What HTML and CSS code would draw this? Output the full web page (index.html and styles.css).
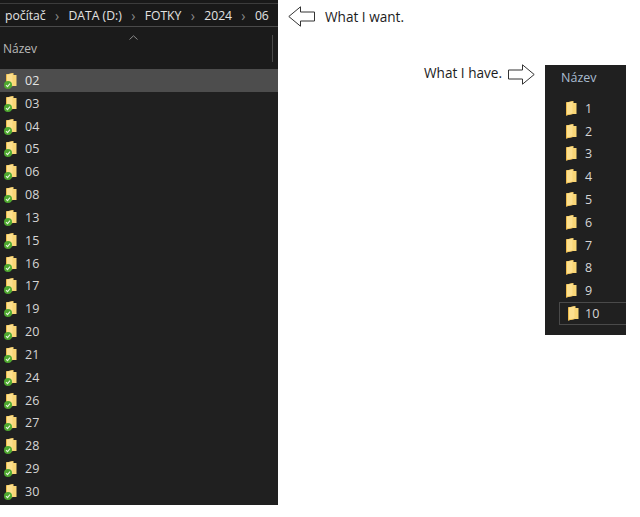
FILE: index.html
```html
<!DOCTYPE html>
<html lang="cs">
<head>
<meta charset="utf-8">
<title>Složky</title>
<link rel="stylesheet" href="styles.css">
</head>
<body>
<svg class="defs" width="0" height="0" aria-hidden="true">
  <defs>
    <symbol id="folder" viewBox="0 0 14 17">
      <path d="M2 2.5 L9.5 1 V3 H12.5 V14 H9 L2 15.5 Z" fill="#f9d676"/>
      <path d="M2 2.5 L8.8 1.2 V14 L2 15.5 Z" fill="#eebb4c"/>
      <path d="M3 2.6 L8.8 1.4 V13.5 L3 14.6 Z" fill="#fde08e"/>
    </symbol>
    <symbol id="badge" viewBox="0 0 8 8">
      <circle cx="4" cy="4" r="4" fill="#4ea82f"/>
      <path d="M2 4.2 L3.5 5.6 L6 2.7" fill="none" stroke="#e9f6df" stroke-width="1.1"/>
    </symbol>
  </defs>
</svg>
<div class="page">
  <section class="explorer">
    <div class="topline"></div>
    <nav class="crumbs">
      <span class="crumb">počítač</span><span class="sep">›</span>
      <span class="crumb">DATA (D:)</span><span class="sep">›</span>
      <span class="crumb">FOTKY</span><span class="sep">›</span>
      <span class="crumb">2024</span><span class="sep">›</span>
      <span class="crumb">06</span>
    </nav>
    <div class="header">
      <svg class="sort" width="9" height="5" viewBox="0 0 9 5"><path d="M0.5 4.5 L4.5 0.8 L8.5 4.5" fill="none" stroke="#8a8a8a"/></svg>
      <span>Název</span>
      <i class="divider"></i>
    </div>
    <ul class="rows">
      <li class="row selected"><span class="ico"><svg class="f"><use href="#folder"/></svg><svg class="b"><use href="#badge"/></svg></span>02</li>
      <li class="row"><span class="ico"><svg class="f"><use href="#folder"/></svg><svg class="b"><use href="#badge"/></svg></span>03</li>
      <li class="row"><span class="ico"><svg class="f"><use href="#folder"/></svg><svg class="b"><use href="#badge"/></svg></span>04</li>
      <li class="row"><span class="ico"><svg class="f"><use href="#folder"/></svg><svg class="b"><use href="#badge"/></svg></span>05</li>
      <li class="row"><span class="ico"><svg class="f"><use href="#folder"/></svg><svg class="b"><use href="#badge"/></svg></span>06</li>
      <li class="row"><span class="ico"><svg class="f"><use href="#folder"/></svg><svg class="b"><use href="#badge"/></svg></span>08</li>
      <li class="row"><span class="ico"><svg class="f"><use href="#folder"/></svg><svg class="b"><use href="#badge"/></svg></span>13</li>
      <li class="row"><span class="ico"><svg class="f"><use href="#folder"/></svg><svg class="b"><use href="#badge"/></svg></span>15</li>
      <li class="row"><span class="ico"><svg class="f"><use href="#folder"/></svg><svg class="b"><use href="#badge"/></svg></span>16</li>
      <li class="row"><span class="ico"><svg class="f"><use href="#folder"/></svg><svg class="b"><use href="#badge"/></svg></span>17</li>
      <li class="row"><span class="ico"><svg class="f"><use href="#folder"/></svg><svg class="b"><use href="#badge"/></svg></span>19</li>
      <li class="row"><span class="ico"><svg class="f"><use href="#folder"/></svg><svg class="b"><use href="#badge"/></svg></span>20</li>
      <li class="row"><span class="ico"><svg class="f"><use href="#folder"/></svg><svg class="b"><use href="#badge"/></svg></span>21</li>
      <li class="row"><span class="ico"><svg class="f"><use href="#folder"/></svg><svg class="b"><use href="#badge"/></svg></span>24</li>
      <li class="row"><span class="ico"><svg class="f"><use href="#folder"/></svg><svg class="b"><use href="#badge"/></svg></span>26</li>
      <li class="row"><span class="ico"><svg class="f"><use href="#folder"/></svg><svg class="b"><use href="#badge"/></svg></span>27</li>
      <li class="row"><span class="ico"><svg class="f"><use href="#folder"/></svg><svg class="b"><use href="#badge"/></svg></span>28</li>
      <li class="row"><span class="ico"><svg class="f"><use href="#folder"/></svg><svg class="b"><use href="#badge"/></svg></span>29</li>
      <li class="row"><span class="ico"><svg class="f"><use href="#folder"/></svg><svg class="b"><use href="#badge"/></svg></span>30</li>
    </ul>
  </section>

  <div class="notes">
    <p class="want">
      <svg class="arrow" width="28" height="21" viewBox="0 0 28 21"><path d="M0.8 10.5 L12.5 0.8 V6 H26.5 V15 H12.5 V20.2 Z" fill="#fff" stroke="#333"/></svg>
      <span>What I want.</span>
    </p>
    <div class="have">
      <p class="have-note">
        <span>What I have.</span>
        <svg class="arrow" width="28" height="21" viewBox="0 0 28 21"><path d="M27.2 10.5 L15.5 0.8 V6 H1.5 V15 H15.5 V20.2 Z" fill="#fff" stroke="#333"/></svg>
      </p>
      <section class="mini">
        <div class="mini-head">Název</div>
        <ul class="mini-rows">
          <li class="mini-row"><svg class="mf"><use href="#folder"/></svg>1</li>
          <li class="mini-row"><svg class="mf"><use href="#folder"/></svg>2</li>
          <li class="mini-row"><svg class="mf"><use href="#folder"/></svg>3</li>
          <li class="mini-row"><svg class="mf"><use href="#folder"/></svg>4</li>
          <li class="mini-row"><svg class="mf"><use href="#folder"/></svg>5</li>
          <li class="mini-row"><svg class="mf"><use href="#folder"/></svg>6</li>
          <li class="mini-row"><svg class="mf"><use href="#folder"/></svg>7</li>
          <li class="mini-row"><svg class="mf"><use href="#folder"/></svg>8</li>
          <li class="mini-row"><svg class="mf"><use href="#folder"/></svg>9</li>
          <li class="mini-row focused"><svg class="mf"><use href="#folder"/></svg>10</li>
        </ul>
      </section>
    </div>
  </div>
</div>
</body>
</html>
```

FILE: styles.css
```css
* { box-sizing: border-box; }
html, body { margin: 0; padding: 0; background: #fff; }
body { font-family: "Open Sans", "Noto Sans", sans-serif; font-size: 12px; width: 640px; height: 517px; overflow: hidden; }
ul { list-style: none; margin: 0; padding: 0; }
p { margin: 0; }
.defs { position: absolute; }
.page { display: flex; align-items: flex-start; }

.explorer { width: 278px; height: 505px; flex: none; background: #202020; color: #dcdcdc; overflow: hidden; }
.topline { height: 4px; background: #191919; border-bottom: 1px solid #3c3c3c; }
.crumbs { height: 23px; background: #191919; border-bottom: 1px solid #4a4a4a; display: flex; align-items: center; padding-left: 5px; white-space: nowrap; font-size: 12.2px; color: #e2e2e2; }
.sep { color: #8a8a8a; width: 22.8px; text-align: center; font-size: 14px; }
.header { height: 42px; background: #1b1b1b; position: relative; display: flex; align-items: center; padding: 0 0 0 3px; font-size: 12px; color: #b9b9b9; }
.sort { position: absolute; left: 129px; top: 8px; }
.divider { position: absolute; left: 272px; top: 8px; height: 27px; width: 1px; background: #4a4a4a; }
.rows { display: block; }
.row { height: 22.83px; display: flex; align-items: center; color: #d6d6d6; font-size: 12.5px; padding-left: 4px; }
.row.selected { background: #4d4d4d; color: #e4e4e4; }
.ico { position: relative; width: 14px; height: 17px; margin-right: 7px; flex: none; display: block; }
.ico .f { position: absolute; left: 0; top: 0; width: 14px; height: 17px; }
.ico .b { position: absolute; left: 0; top: 9px; width: 8px; height: 8px; }

.notes { flex: 1; display: flex; flex-direction: column; color: #1c1c1c; font-size: 13.6px; }
.want { display: flex; align-items: center; gap: 9px; margin: 6px 0 0 10px; height: 21px; }
.have { display: flex; align-items: flex-start; margin: 38px 0 0 146px; }
.have-note { display: flex; align-items: center; gap: 5px; height: 21px; margin-top: -1px; flex: none; }
.have-note span { position: relative; top: -2px; }
.mini { width: 81px; height: 270px; margin-left: 10px; flex: none; background: #202020; color: #d6d6d6; overflow: hidden; }
.mini-head { height: 23px; padding: 4px 0 0 16px; color: #a9bcd0; font-size: 12.5px; }
.mini-rows { padding: 9px 0 0 19px; }
.mini-row { height: 22.8px; display: flex; align-items: center; font-size: 12.5px; }
.mini-row.focused { margin-left: -5px; padding-left: 6px; border: 1px solid #4a4a4a; border-right: none; width: 67px; }
.mf { width: 14px; height: 17px; margin-right: 7px; flex: none; }
.focused .mf { margin-right: 5px; }
```
